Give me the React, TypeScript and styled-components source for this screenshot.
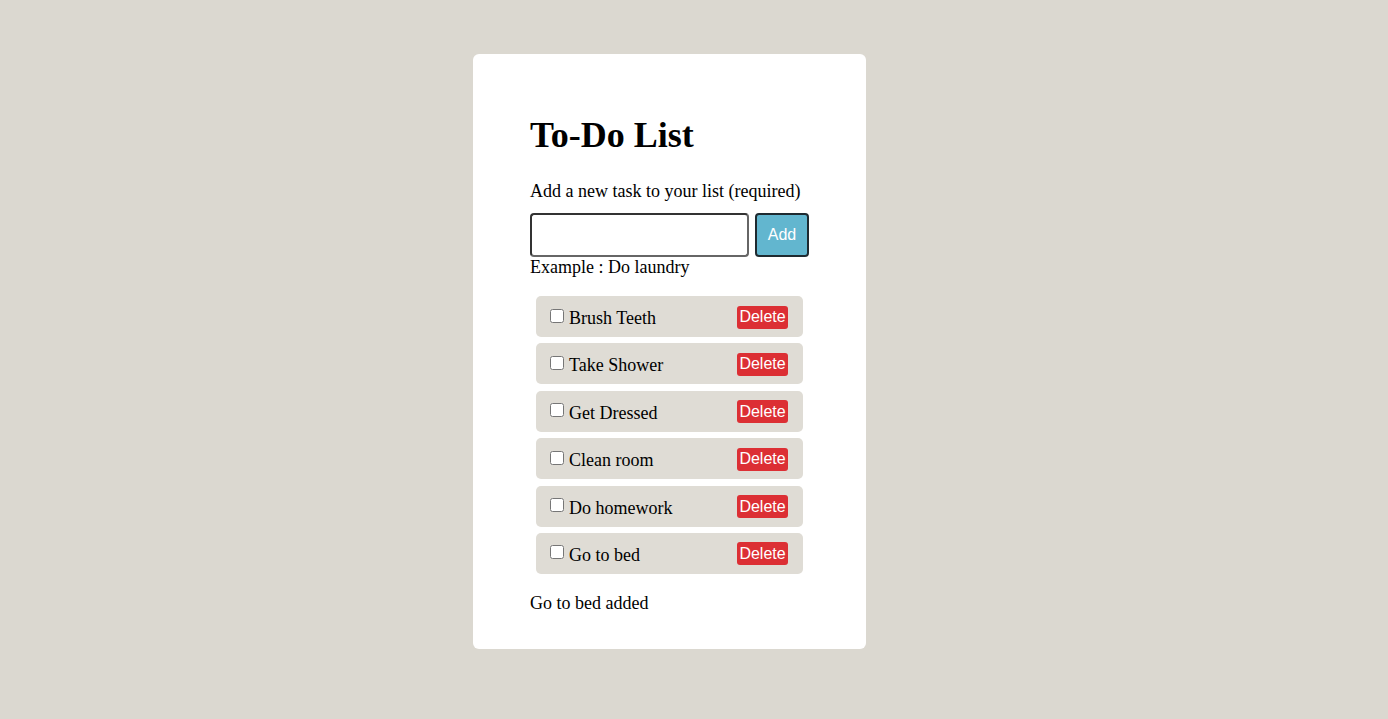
import React from "react";
import styled, { createGlobalStyle } from "styled-components";

const Global = createGlobalStyle`
  html, body { margin: 0; padding: 0; }
  body {
    background: #dbd8d0;
    font-family: "Liberation Serif", "Times New Roman", serif;
    font-size: 18px;
    color: #000;
  }
`;

const Page = styled.main`
  display: flex;
  justify-content: center;
  padding-top: 54px;
  padding-right: 49px;
  min-height: 719px;
  box-sizing: border-box;
`;

const Card = styled.section`
  width: 393px;
  box-sizing: border-box;
  background: #ffffff;
  border-radius: 6px;
  padding: 61px 57px 35px;
  display: flex;
  flex-direction: column;
  height: 595px;
`;

const Title = styled.h1`
  margin: 0;
  font-size: 36px;
  line-height: 41px;
  font-weight: bold;
`;

const Label = styled.label`
  margin-top: 25px;
  line-height: 21px;
  display: block;
`;

const Form = styled.form`
  display: flex;
  gap: 6px;
  margin-top: 11px;
`;

const Input = styled.input`
  width: 219px;
  height: 44px;
  box-sizing: border-box;
  border: 2px solid #333;
  border-right-color: #666;
  border-bottom-color: #666;
  border-radius: 4px;
  padding: 0 6px;
  font-size: 18px;
  background: #fff;
`;

const AddButton = styled.button`
  width: 54px;
  height: 44px;
  box-sizing: border-box;
  background: #62b6cf;
  color: #ffffff;
  border: 2px solid #1e2a30;
  border-radius: 4px;
  font-family: "Liberation Sans", Arial, sans-serif;
  font-size: 16px;
  padding: 0;
`;

const Hint = styled.div`
  line-height: 21px;
`;

const List = styled.ul`
  list-style: none;
  margin: 18px 0 0 6px;
  padding: 0;
  display: flex;
  flex-direction: column;
  gap: 6.4px;
  width: 267px;
`;

const Item = styled.li`
  height: 41px;
  box-sizing: border-box;
  background: #dfdcd5;
  border-radius: 5px;
  display: flex;
  align-items: center;
  justify-content: space-between;
  padding: 0 15px 0 14px;
`;

const ItemLabel = styled.label`
  display: flex;
  align-items: center;
  gap: 2px;
  line-height: 21px;
  padding-top: 4px;
`;

const Check = styled.input`
  width: 14px;
  height: 14px;
  margin: 0 3px 6px 0;
`;

const DeleteButton = styled.button`
  background: #dc2f34;
  color: #ffffff;
  border: none;
  border-radius: 3px;
  font-family: "Liberation Sans", Arial, sans-serif;
  font-size: 16px;
  height: 23px;
  width: 51px;
  padding: 0;
  margin-top: 1px;
`;

const Status = styled.p`
  margin: 19px 0 0;
  line-height: 21px;
`;

const tasks = [
  "Brush Teeth",
  "Take Shower",
  "Get Dressed",
  "Clean room",
  "Do homework",
  "Go to bed",
];

export default function App() {
  return (
    <>
      <Global />
      <Page>
        <Card>
          <Title>To-Do List</Title>
          <Label htmlFor="new-task">Add a new task to your list (required)</Label>
          <Form onSubmit={(e) => e.preventDefault()}>
            <Input id="new-task" type="text" />
            <AddButton type="submit">Add</AddButton>
          </Form>
          <Hint>Example : Do laundry</Hint>
          <List>
            {tasks.map((t) => (
              <Item key={t}>
                <ItemLabel>
                  <Check type="checkbox" />
                  {t}
                </ItemLabel>
                <DeleteButton type="button">Delete</DeleteButton>
              </Item>
            ))}
          </List>
          <Status>Go to bed added</Status>
        </Card>
      </Page>
    </>
  );
}
